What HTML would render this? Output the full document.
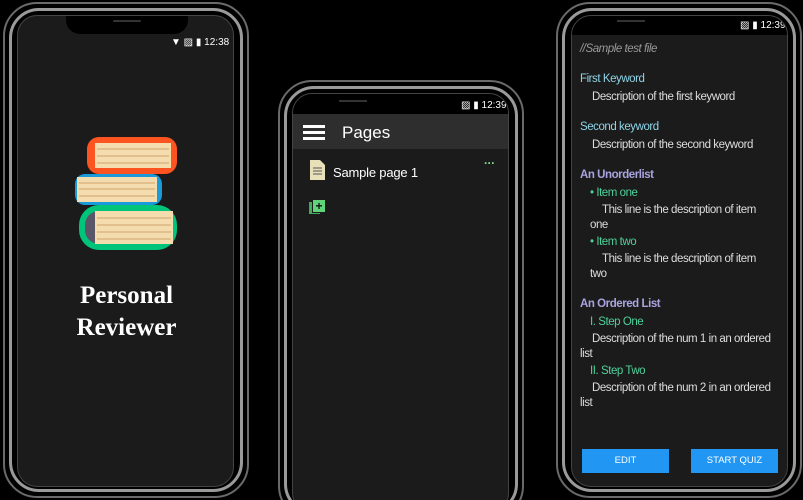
<!DOCTYPE html>
<html style="overflow:hidden;height:500px"><head><style>
body{margin:0;width:803px;height:500px;background:#000;position:relative;overflow:hidden;font-family:"Liberation Sans",sans-serif}
.a{position:absolute}
.o{position:absolute;border:2px solid #6a6a6a;border-radius:34px;background:#000;box-sizing:border-box}
.o2{position:absolute;left:4px;top:4px;right:4px;bottom:4px;border:3px solid #9a9a9a;border-radius:30px;box-sizing:border-box}
.scr{position:absolute;background:#1b1b1b;border:1px solid #444;border-radius:20px;overflow:hidden;box-sizing:border-box}
.st{position:absolute;color:#fff;font-size:10px}
.t{position:absolute;font-size:11.5px;letter-spacing:-0.45px;color:#ddd;white-space:nowrap}
.k{color:#8fd4e8}.p{color:#a9a4e0;font-weight:bold}.g{color:#4fd19a}
.btn{position:absolute;background:#2196f3;color:#fff;font-size:9.5px;text-align:center;line-height:24px;height:24px}
</style></head><body>
<!-- phone1 -->
<div class="o" style="left:3px;top:2px;width:246px;height:496px"><div class="o2"></div></div>
<div class="scr" style="left:17px;top:15px;width:217px;height:472px">
 <div class="a" style="left:48px;top:-2px;width:122px;height:20px;background:#000;border-radius:0 0 14px 14px"></div>
 <div class="a" style="left:95px;top:4px;width:28px;height:2px;background:#333;border-radius:2px"></div>
 <div class="st" style="left:153px;top:21px">▼ ▨ ▮ 12:38</div>
 <svg class="a" style="left:57px;top:121px" width="102" height="113" viewBox="0 0 102 113">
  <rect x="12" y="0" width="90" height="37" rx="12" fill="#fb5420"/>
  <rect x="20" y="6" width="76" height="25" fill="#f5dcae"/>
  <g stroke="#e2c08e" stroke-width="2"><line x1="22" y1="12" x2="94" y2="12"/><line x1="22" y1="19" x2="94" y2="19"/><line x1="22" y1="26" x2="94" y2="26"/></g>
  <rect x="0" y="37" width="87" height="31" rx="10" fill="#1a9ad8"/>
  <rect x="2" y="40" width="80" height="25" fill="#f5dcae"/>
  <g stroke="#e2c08e" stroke-width="2"><line x1="4" y1="46" x2="80" y2="46"/><line x1="4" y1="52" x2="80" y2="52"/><line x1="4" y1="59" x2="80" y2="59"/></g>
  <rect x="4" y="68" width="98" height="45" rx="20" fill="#00c47a"/>
  <rect x="10" y="74" width="88" height="33" rx="14" fill="#5a5567"/>
  <rect x="20" y="74" width="78" height="33" fill="#f5dcae"/>
  <g stroke="#e2c08e" stroke-width="2"><line x1="22" y1="81" x2="96" y2="81"/><line x1="22" y1="88" x2="96" y2="88"/><line x1="22" y1="95" x2="96" y2="95"/><line x1="22" y1="102" x2="96" y2="102"/></g>
 </svg>
 <div class="a" style="left:0;width:217px;top:264px;text-align:center;color:#fff;font:bold 25px/32px 'Liberation Serif',serif">Personal<br>Reviewer</div>
</div>
<!-- phone2 -->
<div class="o" style="left:278px;top:80px;width:246px;height:440px"><div class="o2"></div></div>
<div class="scr" style="left:292px;top:93px;width:217px;height:420px">
 <div class="a" style="left:0;top:0;width:217px;height:20px;background:#000"></div>
 <div class="a" style="left:46px;top:6px;width:28px;height:2px;background:#333"></div>
 <div class="st" style="left:168px;top:6px">▨ ▮ 12:39</div>
 <div class="a" style="left:0;top:20px;width:217px;height:35px;background:#2e2e2e"></div>
 <div class="a" style="left:10px;top:31px;width:22px;height:3px;background:#fff;box-shadow:0 6px #fff,0 12px #fff"></div>
 <div class="t" style="left:49px;top:29px;font-size:17px;letter-spacing:0;color:#fff">Pages</div>
 <svg class="a" style="left:17px;top:66px" width="15" height="20"><path d="M0 0H10L15 5V20H0Z" fill="#e8e0b8"/><g stroke="#555" stroke-width="1"><line x1="3" y1="8" x2="12" y2="8"/><line x1="3" y1="11" x2="12" y2="11"/><line x1="3" y1="14" x2="12" y2="14"/></g></svg>
 <div class="t" style="left:40px;top:71px;font-size:13px;letter-spacing:-0.2px;color:#fff">Sample page 1</div>
 <div class="t" style="left:191px;top:62px;color:#7de08a;font-size:12px;font-weight:bold">···</div>
 <div class="a" style="left:16px;top:108px;width:11px;height:12px;background:#3fae5a"></div>
 <div class="a" style="left:19px;top:105px;width:12px;height:12px;background:#5fd47a;border:1px solid #1b1b1b;color:#111;font:bold 12px/12px sans-serif;text-align:center">+</div>
</div>
<!-- phone3 -->
<div class="o" style="left:556px;top:2px;width:246px;height:496px"><div class="o2"></div></div>
<div class="scr" style="left:571px;top:15px;width:217px;height:472px">
 <div class="a" style="left:0;top:0;width:217px;height:19px;background:#000"></div>
 <div class="a" style="left:45px;top:4px;width:28px;height:2px;background:#333"></div>
 <div class="st" style="left:168px;top:4px">▨ ▮ 12:39</div>
 <div class="t" style="left:8px;top:27px;color:#999;font-style:italic">//Sample test file</div>
 <div class="t k" style="left:8px;top:57px">First Keyword</div>
 <div class="t" style="left:20px;top:75px">Description of the first keyword</div>
 <div class="t k" style="left:8px;top:105px">Second keyword</div>
 <div class="t" style="left:20px;top:123px">Description of the second keyword</div>
 <div class="t p" style="left:8px;top:153px">An Unorderlist</div>
 <div class="t g" style="left:18px;top:171px">• Item one</div>
 <div class="t" style="left:30px;top:188px">This line is the description of item</div>
 <div class="t" style="left:18px;top:203px">one</div>
 <div class="t g" style="left:18px;top:220px">• Item two</div>
 <div class="t" style="left:30px;top:237px">This line is the description of item</div>
 <div class="t" style="left:18px;top:252px">two</div>
 <div class="t p" style="left:8px;top:282px">An Ordered List</div>
 <div class="t g" style="left:18px;top:300px">I. Step One</div>
 <div class="t" style="left:20px;top:317px">Description of the num 1 in an ordered</div>
 <div class="t" style="left:8px;top:332px">list</div>
 <div class="t g" style="left:18px;top:349px">II. Step Two</div>
 <div class="t" style="left:20px;top:366px">Description of the num 2 in an ordered</div>
 <div class="t" style="left:8px;top:381px">list</div>
 <div class="btn" style="left:10px;top:433px;width:87px">EDIT</div>
 <div class="btn" style="left:119px;top:433px;width:87px">START QUIZ</div>
</div>
</body></html>
